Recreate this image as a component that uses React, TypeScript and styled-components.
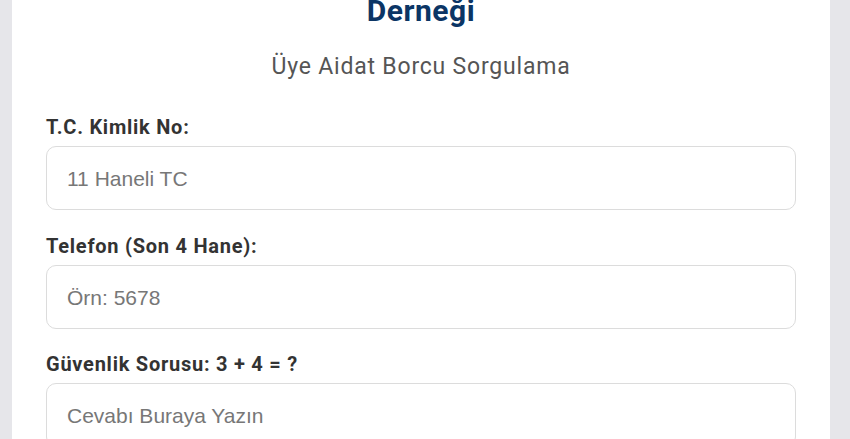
import React from "react";
import styled, { createGlobalStyle } from "styled-components";

const GlobalStyle = createGlobalStyle`
  html, body {
    margin: 0;
    padding: 0;
    background: #e6e6ea;
    font-family: Roboto, "Noto Sans", Arial, sans-serif;
    overflow: hidden;
  }
`;

const Page = styled.div`
  display: flex;
  padding-left: 12px;
  margin-top: -37px;
`;

const Card = styled.div`
  width: 818px;
  box-sizing: border-box;
  background: #ffffff;
  padding: 30px 34px 40px;
  display: flex;
  flex-direction: column;
`;

const Title = styled.h1`
  margin: 0;
  text-align: center;
  font-size: 30px;
  line-height: 36px;
  font-weight: 700;
  letter-spacing: 0.5px;
  color: #0b3565;
`;

const Subtitle = styled.p`
  margin: 23px 0 34px;
  text-align: center;
  font-size: 23px;
  line-height: 30px;
  font-weight: 400;
  letter-spacing: 0.8px;
  color: #555555;
`;

const Form = styled.form`
  display: flex;
  flex-direction: column;
  gap: 24.5px;
`;

const Field = styled.div`
  display: flex;
  flex-direction: column;
  gap: 8px;
`;

const Label = styled.label`
  font-size: 20px;
  line-height: 22px;
  font-weight: 700;
  letter-spacing: 0.75px;
  color: #333333;
`;

const Input = styled.input`
  height: 64px;
  box-sizing: border-box;
  border: 1px solid #dcdcdc;
  border-radius: 10px;
  padding: 2px 20px 0;
  font-family: "Liberation Sans", Arial, sans-serif;
  font-size: 21px;
  color: #333;
  outline: none;

  &::placeholder {
    color: #777777;
  }
`;

const fields = [
  { id: "tc", label: "T.C. Kimlik No:", placeholder: "11 Haneli TC" },
  { id: "tel", label: "Telefon (Son 4 Hane):", placeholder: "Örn: 5678" },
  { id: "captcha", label: "Güvenlik Sorusu: 3 + 4 = ?", placeholder: "Cevabı Buraya Yazın" },
];

const App = () => {
  return (
    <>
      <GlobalStyle />
      <Page>
        <Card>
          <Title>Derneği</Title>
          <Subtitle>Üye Aidat Borcu Sorgulama</Subtitle>
          <Form onSubmit={(e) => e.preventDefault()}>
            {fields.map((f) => (
              <Field key={f.id}>
                <Label htmlFor={f.id}>{f.label}</Label>
                <Input id={f.id} type="text" placeholder={f.placeholder} />
              </Field>
            ))}
          </Form>
        </Card>
      </Page>
    </>
  );
};

export default App;
